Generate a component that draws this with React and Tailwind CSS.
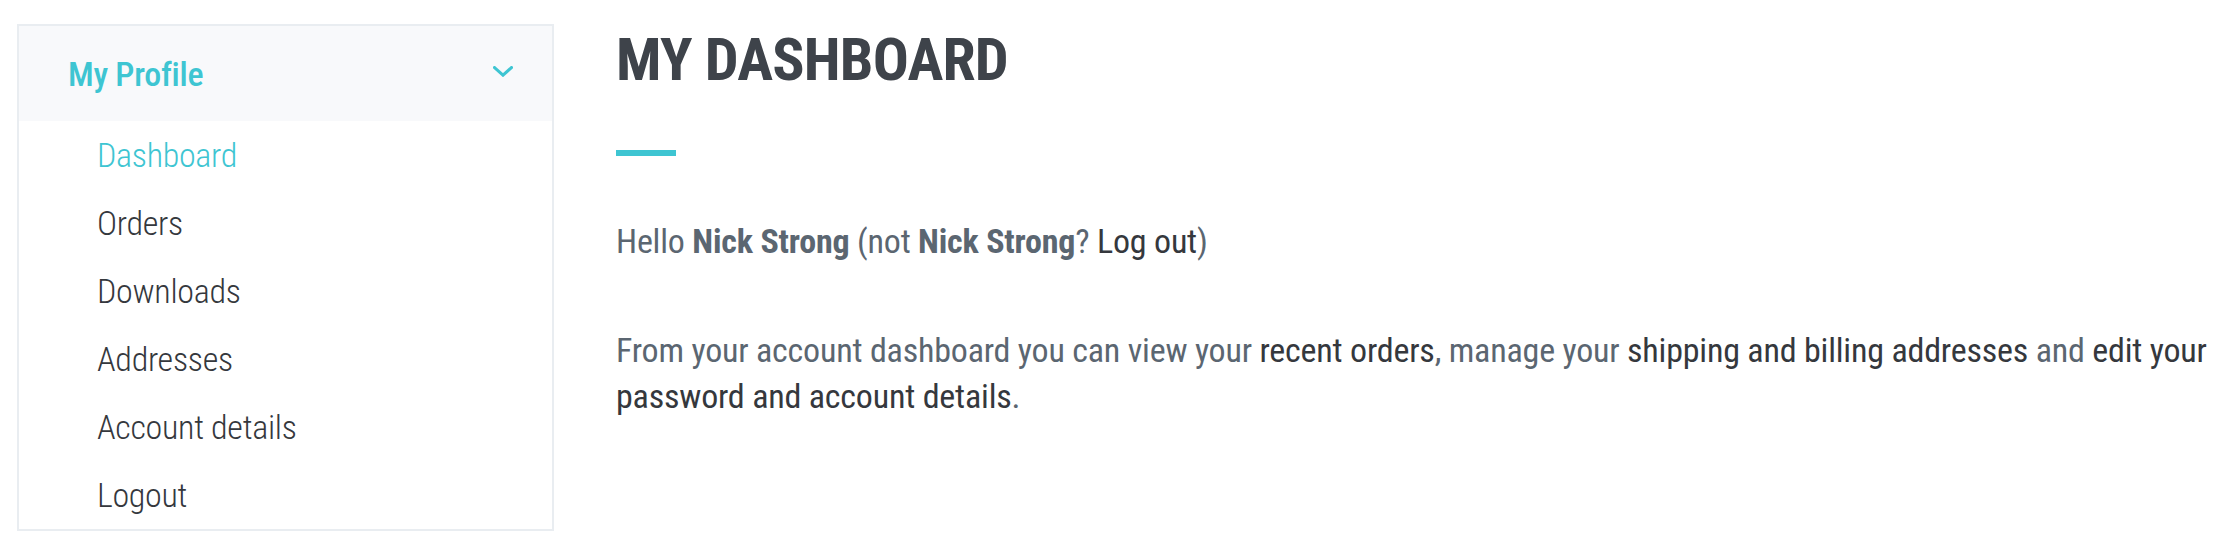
import React from "react";

const items = ["Dashboard", "Orders", "Downloads", "Addresses", "Account details", "Logout"];

export default function App() {
  return (
    <div className="flex min-h-[554px] bg-white pt-[24px] pl-[17px] pr-[8px] font-['Roboto',sans-serif] [font-stretch:condensed]">
      <aside className="w-[537px] shrink-0 self-start border-2 border-[#e9edf1] bg-white">
        <div className="flex h-[95px] items-center justify-between bg-[#f8f9fb] pl-[49px] pr-[39px]">
          <span className="text-[34px] leading-[40px] font-medium tracking-[-0.3px] text-[#3ec5d2]">My Profile</span>
          <svg width="20" height="11" viewBox="0 0 20 11" fill="none" className="mb-[4px]">
            <polyline points="1.5,1.5 10,9.2 18.5,1.5" stroke="#3ec5d2" strokeWidth="3" strokeLinecap="square" strokeLinejoin="miter" />
          </svg>
        </div>
        <ul className="flex flex-col">
          {items.map((it, i) => (
            <li
              key={it}
              className={
                i === 0
                  ? "h-[68px] pl-[78px] text-[34px] leading-[68px] font-light tracking-[-0.3px] text-[#3ec5d2]"
                  : "h-[68px] pl-[78px] text-[34px] leading-[68px] font-light tracking-[-0.3px] text-[#35383d]"
              }
            >
              {it}
            </li>
          ))}
        </ul>
      </aside>
      <main className="ml-[62px] flex-1">
        <h1 className="text-[60px] leading-[72px] font-bold uppercase tracking-[-0.8px] text-[#3e434a]">My Dashboard</h1>
        <div className="mt-[54px] h-[6px] w-[60px] bg-[#3ec5d2]"></div>
        <p className="mt-[62px] text-[34px] leading-[46px] tracking-[-0.2px] text-[#5b6671]">
          Hello <strong className="font-bold">Nick Strong</strong> (not <strong className="font-bold">Nick Strong</strong>?{" "}
          <a className="text-[#35383d]">Log out</a>)
        </p>
        <p className="mt-[63px] text-[34px] leading-[46px] tracking-[-0.2px] text-[#5b6671]">
          From your account dashboard you can view your <a className="text-[#35383d]">recent orders</a>, manage your{" "}
          <a className="text-[#35383d]">shipping and billing addresses</a> and{" "}
          <a className="text-[#35383d]">edit your password and account details</a>.
        </p>
      </main>
    </div>
  );
}
